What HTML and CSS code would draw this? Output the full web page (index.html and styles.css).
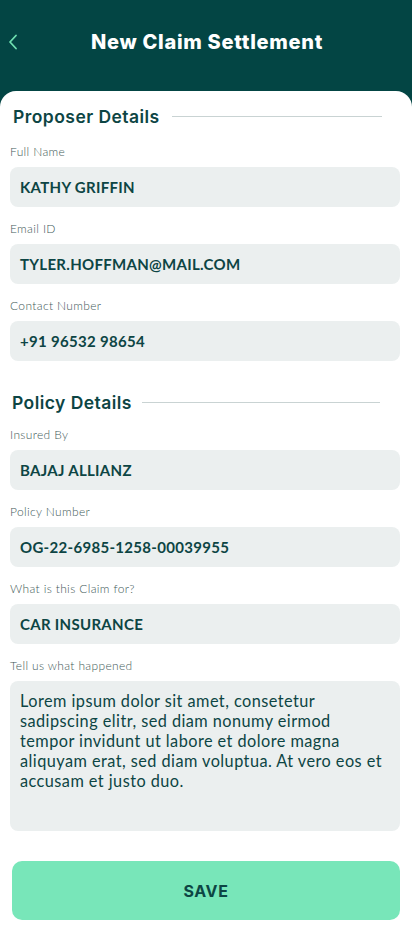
FILE: index.html
```html
<!DOCTYPE html>
<html>
<head>
<meta charset="utf-8">
<link rel="stylesheet" href="styles.css">
</head>
<body>
<div class="screen">
  <header class="topbar">
    <svg class="back" width="10" height="16" viewBox="0 0 10 16"><path d="M8 1.5 L2 8 L8 14.5" fill="none" stroke="#6fe0b1" stroke-width="1.8" stroke-linecap="round" stroke-linejoin="round"/></svg>
    <h1 class="title">New Claim Settlement</h1>
  </header>
  <main class="card">
    <section class="section">
      <div class="sec-head first"><h2>Proposer Details</h2><span class="rule"></span></div>
      <div class="field"><label>Full Name</label><div class="input">KATHY GRIFFIN</div></div>
      <div class="field"><label>Email ID</label><div class="input">TYLER.HOFFMAN@MAIL.COM</div></div>
      <div class="field"><label>Contact Number</label><div class="input">+91 96532 98654</div></div>
    </section>
    <section class="section">
      <div class="sec-head second"><h2>Policy Details</h2><span class="rule"></span></div>
      <div class="field"><label>Insured By</label><div class="input">BAJAJ ALLIANZ</div></div>
      <div class="field"><label>Policy Number</label><div class="input">OG-22-6985-1258-00039955</div></div>
      <div class="field"><label>What is this Claim for?</label><div class="input">CAR INSURANCE</div></div>
      <div class="field"><label>Tell us what happened</label><div class="textarea">Lorem ipsum dolor sit amet, consetetur sadipscing elitr, sed diam nonumy eirmod tempor invidunt ut labore et dolore magna aliquyam erat, sed diam voluptua. At vero eos et accusam et justo duo.</div></div>
    </section>
    <button class="save">SAVE</button>
  </main>
</div>
</body>
</html>
```
FILE: styles.css
```css
* { box-sizing: border-box; }
html, body { margin: 0; padding: 0; }
body { background: #ffffff; font-family: "Lato", "Open Sans", sans-serif; width: 412px; height: 942px; overflow: hidden; }
.screen { background: #034544; min-height: 942px; }
.topbar { height: 91px; display: flex; align-items: center; position: relative; padding-bottom: 7px; }
.back { position: absolute; left: 8px; top: 34px; }
.title { margin: 0; width: 100%; text-align: center; color: #ffffff; font-family: "Inter", "Roboto", sans-serif; font-weight: 800; font-size: 20px; letter-spacing: 0.7px; padding-left: 2px; }
.card { background: #ffffff; border-radius: 16px 16px 0 0; min-height: 851px; padding: 0 12px 0 10px; }
.sec-head { display: flex; align-items: center; gap: 12px; }
.sec-head.first { height: 50px; margin-bottom: 3px; padding: 0 18px 0 3px; }
.sec-head.second { height: 30px; margin-top: 26px; margin-bottom: 10px; padding: 0 20px 0 2px; }
.sec-head h2 { margin: 0; font-family: "Inter", "Roboto", sans-serif; font-weight: 600; font-size: 17.5px; color: #0d4544; white-space: nowrap; letter-spacing: 0.45px; }
.rule { flex: 1; height: 1px; background: #c9d3d3; }
.second .rule { margin-left: -2px; }
.field { display: flex; flex-direction: column; }
.field label { font-size: 12px; line-height: 16px; height: 16px; color: #3f5a59; margin-bottom: 7px; letter-spacing: 0.35px; font-weight: 300; }
.field + .field label { margin-top: 14px; }
.input { height: 40px; background: #ebefef; border-radius: 8px; display: flex; align-items: center; padding: 0 10px; font-weight: 700; font-size: 15px; color: #0d4544; letter-spacing: 0.3px; }
.textarea { height: 150px; background: #ebefef; border-radius: 8px; padding: 10px 10px; font-size: 16.3px; line-height: 20px; color: #0d4544; letter-spacing: 0.45px; }
.save { display: block; width: 388px; height: 59px; margin: 30px 0 0 2px; border: none; border-radius: 10px; background: #78e6b9; color: #0d4544; font-family: "Inter", "Roboto", sans-serif; font-weight: 700; font-size: 16px; letter-spacing: 0.6px; }
```
